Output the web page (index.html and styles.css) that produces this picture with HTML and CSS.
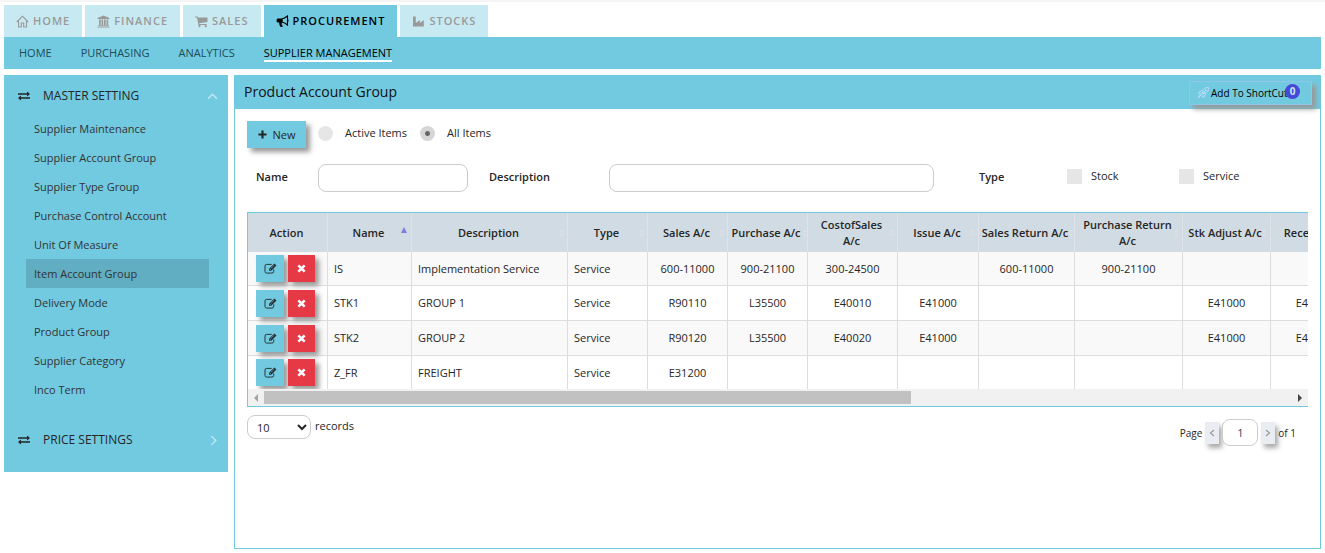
FILE: index.html
```html
<!DOCTYPE html>
<html lang="en">
<head>
<meta charset="utf-8">
<title>Product Account Group</title>
<link rel="stylesheet" href="styles.css">
</head>
<body>
<svg class="defs" aria-hidden="true">
  <symbol id="i-edit" viewBox="0 0 14 12"><path d="M10.500 7v2.200a1.800 1.800 0 0 1-1.800 1.800H2.800A1.800 1.800 0 0 1 1 9.200V3.300a1.800 1.800 0 0 1 1.800-1.800h5.500" fill="none" stroke="currentColor"/><path d="M5.500 8.500V6.200L11.200.5l2.300 2.300-5.700 5.700z" fill="currentColor"/><path d="M6.500 6.700l1 1M7.200 6.200l4-4" stroke="#71cae0" stroke-width=".7"/></symbol>
  <symbol id="i-x" viewBox="0 0 10 10"><path d="M1.500 1.500l7 7M8.500 1.500l-7 7" stroke="currentColor" stroke-width="2.800"/></symbol>
  <symbol id="i-swap" viewBox="0 0 12 10"><path d="M0 3h9.500M2.500 7H12" stroke="currentColor" stroke-width="1.300"/><path d="M9 .5L12 3 9 5.500zM3 4.500L0 7l3 2.500z" fill="currentColor"/></symbol>
  <symbol id="i-sort" viewBox="0 0 6 10"><path d="M3 0l3 4H0zM3 10l3-4H0z" fill="currentColor"/></symbol>
</svg>
<header class="top">
  <nav class="tabs" aria-label="Modules">
    <a class="tab" href="#"><svg class="ico" viewBox="0 0 13 13"><path d="M.8 7L6.500 1.200 12.200 7M2.500 5.800V12h2.800V8h2.400v4h2.800V5.800" fill="none" stroke="currentColor" stroke-width="1.100"/></svg>HOME</a>
    <a class="tab" href="#"><svg class="ico" viewBox="0 0 13 13"><path d="M6.500.5l6 2.500v1H.5V3zM2 4.500h1.700V10H2zm2.500 0h1.700V10H4.500zm2.500 0h1.700V10H7zm2.500 0h1.700V10H9.500zM1.200 10.200h10.600v.8H1.200zM.5 11.500h12v1H.5z" fill="currentColor"/></svg>FINANCE</a>
    <a class="tab" href="#"><svg class="ico" viewBox="0 0 13 13"><path d="M0 1.500h2.600l.4 1h9.500V7L4.300 8.200l.2.800h7v1h-8L1.900 2.500H0z" fill="currentColor"/><circle cx="4.500" cy="11.200" r="1.100" fill="currentColor"/><circle cx="10.800" cy="11.200" r="1.100" fill="currentColor"/></svg>SALES</a>
    <a class="tab tab-on" href="#" aria-current="page"><svg class="ico" viewBox="0 0 13 13"><path d="M11.500 1v9C9.500 8.300 8 7.500 6.200 7.300V3.700C8 3.500 9.500 2.700 11.500 1z" fill="none" stroke="currentColor" stroke-width="1.100"/><path d="M1.500 3.500H6v4.100l-.5 1.600 1.500 2c-.8 1-2.300.9-2.900.3-.3-1.300-1.100-2.300-.8-4H1.500C.2 7 .2 4 1.500 3.500zM11.500 4.400h1v2.200h-1z" fill="currentColor"/></svg>PROCUREMENT</a>
    <a class="tab" href="#"><svg class="ico" viewBox="0 0 13 13"><path d="M1 1.500h2.800V8l4-3v3l4-3v6.500H1z" fill="currentColor"/></svg>STOCKS</a>
  </nav>
  <nav class="subnav" aria-label="Procurement">
    <a class="sub" href="#">HOME</a>
    <a class="sub" href="#">PURCHASING</a>
    <a class="sub" href="#">ANALYTICS</a>
    <a class="sub sub-on" href="#" aria-current="page">SUPPLIER MANAGEMENT</a>
  </nav>
</header>
<div class="layout">
  <aside class="side">
    <a class="group" href="#"><svg class="swap"><use href="#i-swap"/></svg><span>MASTER SETTING</span><svg class="chev" viewBox="0 0 10 10"><path d="M1 7l4-4 4 4" fill="none" stroke="currentColor" stroke-width="1.200"/></svg></a>
    <ul class="items">
      <li><a class="item" href="#">Supplier Maintenance</a></li>
      <li><a class="item" href="#">Supplier Account Group</a></li>
      <li><a class="item" href="#">Supplier Type Group</a></li>
      <li><a class="item" href="#">Purchase Control Account</a></li>
      <li><a class="item" href="#">Unit Of Measure</a></li>
      <li><a class="item item-on" href="#">Item Account Group</a></li>
      <li><a class="item" href="#">Delivery Mode</a></li>
      <li><a class="item" href="#">Product Group</a></li>
      <li><a class="item" href="#">Supplier Category</a></li>
      <li><a class="item" href="#">Inco Term</a></li>
    </ul>
    <a class="group" href="#"><svg class="swap"><use href="#i-swap"/></svg><span>PRICE SETTINGS</span><svg class="chev" viewBox="0 0 10 10"><path d="M4 1l4 4-4 4" fill="none" stroke="currentColor" stroke-width="1.200"/></svg></a>
  </aside>
  <main class="panel">
    <div class="panel-head">
      <h1 class="title">Product Account Group</h1>
      <button class="shortcut" type="button"><svg class="rocket" viewBox="0 0 12 12"><path d="M11.500.5C8 .5 6 2 4.300 4.300L2 4.500.5 7l2.300.2 2 2L5 11.500 7.500 10l.2-2.300C10 6 11.500 4 11.500.5z" fill="none" stroke="currentColor"/><circle cx="8.500" cy="3.500" r="1" fill="currentColor"/><path d="M.5 11.500l2.500-3M4 7l2.500-2.500M5.500 8L8 5.500" stroke="currentColor" stroke-width="1.500"/></svg>Add To ShortCut<span class="badge">0</span></button>
    </div>
    <div class="content">
      <div class="tools">
        <button class="new" type="button"><svg class="plus" viewBox="0 0 10 10"><path d="M5 .5v9M.5 5h9" stroke="currentColor" stroke-width="2.400"/></svg>New</button>
        <label class="opt"><input class="radio" type="radio" name="scope">Active Items</label>
        <label class="opt"><input class="radio" type="radio" name="scope" checked>All Items</label>
      </div>
      <div class="filters">
        <label class="flabel" for="f-name">Name</label><input class="field" id="f-name" type="text">
        <label class="flabel" for="f-desc">Description</label><input class="field" id="f-desc" type="text">
        <span class="flabel">Type</span>
        <label class="tick"><input class="box" type="checkbox">Stock</label>
        <label class="tick"><input class="box" type="checkbox">Service</label>
      </div>
      <div class="grid">
        <div class="view">
          <table class="table">
            <colgroup><col class="w80"><col class="w84"><col class="w156"><col class="w80"><col class="w80"><col class="w80"><col class="w90"><col class="w81"><col class="w96"><col class="w108"><col class="w88"><col class="w88"></colgroup>
            <thead><tr>
              <th>Action</th>
              <th>Name<svg class="sort sort-on" viewBox="0 0 6 6"><path d="M3 0l3 6H0z" fill="currentColor"/></svg></th>
              <th>Description<svg class="sort"><use href="#i-sort"/></svg></th>
              <th>Type<svg class="sort"><use href="#i-sort"/></svg></th>
              <th>Sales A/c<svg class="sort"><use href="#i-sort"/></svg></th>
              <th>Purchase A/c<svg class="sort"><use href="#i-sort"/></svg></th>
              <th>CostofSales A/c<svg class="sort"><use href="#i-sort"/></svg></th>
              <th>Issue A/c<svg class="sort"><use href="#i-sort"/></svg></th>
              <th>Sales Return A/c<svg class="sort"><use href="#i-sort"/></svg></th>
              <th>Purchase Return A/c<svg class="sort"><use href="#i-sort"/></svg></th>
              <th>Stk Adjust A/c<svg class="sort"><use href="#i-sort"/></svg></th>
              <th>Receipt A/c</th>
            </tr></thead>
            <tbody>
              <tr><td><div class="acts"><button class="act" type="button" aria-label="Edit"><svg class="edit"><use href="#i-edit"/></svg></button><button class="act del" type="button" aria-label="Delete"><svg class="x"><use href="#i-x"/></svg></button></div></td><td>IS</td><td>Implementation Service</td><td>Service</td><td>600-11000</td><td>900-21100</td><td>300-24500</td><td></td><td>600-11000</td><td>900-21100</td><td></td><td></td></tr>
              <tr><td><div class="acts"><button class="act" type="button" aria-label="Edit"><svg class="edit"><use href="#i-edit"/></svg></button><button class="act del" type="button" aria-label="Delete"><svg class="x"><use href="#i-x"/></svg></button></div></td><td>STK1</td><td>GROUP 1</td><td>Service</td><td>R90110</td><td>L35500</td><td>E40010</td><td>E41000</td><td></td><td></td><td>E41000</td><td>E41000</td></tr>
              <tr><td><div class="acts"><button class="act" type="button" aria-label="Edit"><svg class="edit"><use href="#i-edit"/></svg></button><button class="act del" type="button" aria-label="Delete"><svg class="x"><use href="#i-x"/></svg></button></div></td><td>STK2</td><td>GROUP 2</td><td>Service</td><td>R90120</td><td>L35500</td><td>E40020</td><td>E41000</td><td></td><td></td><td>E41000</td><td>E41000</td></tr>
              <tr><td><div class="acts"><button class="act" type="button" aria-label="Edit"><svg class="edit"><use href="#i-edit"/></svg></button><button class="act del" type="button" aria-label="Delete"><svg class="x"><use href="#i-x"/></svg></button></div></td><td>Z_FR</td><td>FREIGHT</td><td>Service</td><td>E31200</td><td></td><td></td><td></td><td></td><td></td><td></td><td></td></tr>
            </tbody>
          </table>
        </div>
        <div class="scroll" aria-hidden="true">
          <svg class="arrow arrow-off" viewBox="0 0 8 8"><path d="M6 0v8L2 4z" fill="currentColor"/></svg>
          <div class="track"><div class="thumb"></div></div>
          <svg class="arrow" viewBox="0 0 8 8"><path d="M2 0v8l4-4z" fill="currentColor"/></svg>
        </div>
      </div>
      <div class="foot">
        <label class="records"><select class="size"><option>10</option><option>25</option></select>records</label>
        <div class="pager">
          <label for="page">Page</label>
          <button class="pg" type="button" aria-label="Previous"><svg class="pgi" viewBox="0 0 6 8"><path d="M5 1L1.500 4 5 7" fill="none" stroke="currentColor" stroke-width="1.200"/></svg></button>
          <input class="pageno" id="page" type="text" value="1">
          <button class="pg" type="button" aria-label="Next"><svg class="pgi" viewBox="0 0 6 8"><path d="M1 1l3.500 3L1 7" fill="none" stroke="currentColor" stroke-width="1.200"/></svg></button>
          <span>of 1</span>
        </div>
      </div>
    </div>
  </main>
</div>
</body>
</html>
```
FILE: styles.css
```css
*{box-sizing:border-box}
body{margin:0;padding:3px 4px 4px;border-top:2px solid #f5f5f5;min-height:100vh;display:flex;flex-direction:column;font:11px/18px "Open Sans","Noto Sans",sans-serif;color:#262626;background:#fff}
a{color:inherit;text-decoration:none}
button,input,select{font:inherit;color:inherit;margin:0}
button{border:0;padding:0;cursor:pointer}
.defs{position:absolute;width:0;height:0}
.tabs{display:flex;gap:3px}
.tab{display:flex;align-items:center;gap:4px;height:32px;padding:0 12px;background:#c7eaf2;color:#999;font-weight:600;letter-spacing:1px}
.tab-on{background:#71cae0;color:#000}
.ico{width:13px;height:13px}
.subnav{display:flex;align-items:center;gap:29px;height:32px;padding:1px 15px 0;background:#71cae0;color:#1f4c57;font-weight:500}
.sub{line-height:14px;border-bottom:2px solid transparent}
.sub-on{color:#000;border-color:#fff}
.layout{flex:1;display:flex;align-items:flex-start;gap:6px;margin-top:6px}
.side{flex:0 0 224px;background:#71cae0;padding:5px 0 16px}
.group{display:flex;align-items:center;gap:13px;height:32px;padding:0 10px 0 14px;font-size:12px}
.swap{width:12px;height:10px}
.chev{width:11px;height:11px;margin-left:auto;color:#c4eaf3}
.items{list-style:none;margin:0;padding:2px 19px 20px 22px}
.item{display:block;height:29px;line-height:29px;padding-left:8px;color:#333}
.item-on{background:#61adc1}
.panel{flex:1;min-width:0;align-self:stretch;border:1px solid #71cae0}
.panel-head{display:flex;justify-content:space-between;align-items:center;height:33px;padding:0 8px 0 9px;background:#71cae0}
.title{margin:0;font-size:14px;line-height:18px;padding-bottom:2px;font-weight:400;color:#111}
.shortcut{position:relative;display:flex;align-items:center;gap:2px;width:123px;height:24px;padding-left:8px;border:1px solid #8fc6ea;background:#71cae0;box-shadow:4px 4px 5px #999;font-size:10px;color:#000}
.rocket{width:11px;height:11px;color:#b9def8}
.badge{position:absolute;right:11px;top:2px;width:15px;height:15px;border-radius:8px;background:#4747d9;color:#c4e9f3;line-height:15px;text-align:center;font-weight:700}
.content{padding:12px}
.tools{display:flex;align-items:flex-start}
.new{display:flex;align-items:center;justify-content:center;gap:6px;width:59px;height:27px;margin-right:12px;background:#71cae0;box-shadow:4px 4px 5px #999}
.plus{width:9px;height:9px}
.opt{display:flex;align-items:center;gap:12px;height:24px;margin-right:13px}
.radio{appearance:none;width:15px;height:15px;border-radius:50%;background:#e6e6e6}
.radio:checked{background:radial-gradient(circle,#666 2px,#d6d6d6 3px)}
.filters{display:grid;grid-template-columns:71px 150px 141px 325px 133px 112px 1fr;align-items:start;line-height:26px;margin-top:16px}
.flabel{font-weight:600}
.flabel:first-child{padding-left:9px}
.field+.flabel{padding-left:21px}
.field+span.flabel{padding-left:45px}
.field{width:100%;height:28px;padding:0 8px;border:1px solid #ccc;border-radius:8px;background:#fff}
.tick{display:flex;align-items:center;gap:9px;line-height:24px}
.box{appearance:none;width:15px;height:15px;background:#e6e6e6}
.grid{margin-top:20px;border:solid #71cae0;border-width:1px 0 1px 1px}
.view{overflow:hidden;height:176px}
.table{table-layout:fixed;border-collapse:separate;border-spacing:0;width:1111px}
.w80{width:80px}.w81{width:81px}.w84{width:84px}.w88{width:88px}.w90{width:90px}.w96{width:96px}.w108{width:108px}.w156{width:156px}
th{position:relative;height:39px;padding:0 10px 0 8px;background:#d1dbe3;border-right:1px solid #dde3e8;font-weight:600;line-height:16px}
.table th:nth-child(6),.table th:nth-child(9),.table th:nth-child(11){padding:0 4px 0 1px;white-space:nowrap}
.sort{position:absolute;right:3px;top:15px;width:5px;height:10px;color:#dcdfe2}
.table th:nth-child(6) .sort,.table th:nth-child(9) .sort{right:0}
.sort-on{right:4px;top:14px;width:6px;height:6px;color:#7a7fdc}
td{height:35px;padding:0 6px;border:solid #ddd;border-width:0 1px 1px 0;text-align:center}
tbody tr:nth-child(odd) td{background:#f9f9f9}
tbody tr:first-child td{height:34px}
tbody tr:nth-child(4) td{height:33px;border-bottom:0}
.table td:nth-child(2),.table td:nth-child(3),.table td:nth-child(4){text-align:left}
.acts{display:flex;gap:4px;padding-left:2px}
.act{display:grid;place-items:center;width:28px;height:27px;background:#71cae0;box-shadow:4px 4px 5px #999}
.del{width:27px;background:#e63946;color:#fff}
.edit{width:13px;height:11px}
.x{width:9px;height:9px}
.scroll{display:flex;align-items:center;height:17px;padding:0 4px;background:#f1f1f1;gap:4px}
.arrow{flex:none;width:8px;height:8px;color:#444}
.arrow-off{color:#a3a3a3}
.track{flex:1;height:13px}
.thumb{width:62.9%;height:13px;background:#c1c1c1}
.foot{display:flex;justify-content:space-between;align-items:flex-start;margin-top:8px}
.records{display:flex;gap:4px;line-height:22px}
.size{width:64px;height:24px;padding:0 0 0 5px;border:1px solid #ccc;border-radius:8px;background:#fff}
.pager{display:flex;align-items:center;gap:3px;padding:4px 12px 0 0;font-size:10px}
.pg{display:grid;place-items:center;width:14px;height:22px;background:#e9ecf0;color:#999;box-shadow:3px 4px 5px #aaa}
.pgi{width:6px;height:8px}
.pageno{width:36px;height:27px;border:1px solid #ccc;border-radius:8px;background:#fff;text-align:center;color:#345;font-size:11px}
```
